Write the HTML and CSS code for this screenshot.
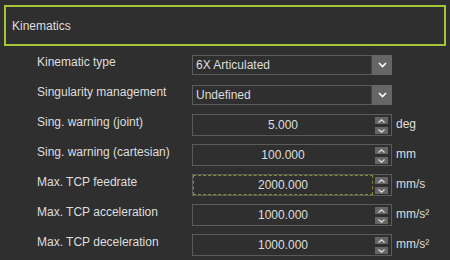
FILE: index.html
```html
<!DOCTYPE html>
<html lang="en">
<head>
    <meta charset="UTF-8">
    <meta name="viewport" content="width=device-width, initial-scale=1.0">
    <title>Kinematics</title>
    <link rel="stylesheet" href="styles.css">
</head>
<body>
    <div class="section-title">Kinematics</div>
    <div class="form">
        <label>Kinematic type</label>
        <div class="combo">
            <span class="value">6X Articulated</span>
            <span class="drop"><svg width="9" height="6" viewBox="0 0 9 6"><path d="M1 1 L4.5 4.5 L8 1" fill="none" stroke="#fff" stroke-width="1.6"/></svg></span>
        </div>
        <span class="unit"></span>

        <label>Singularity management</label>
        <div class="combo">
            <span class="value">Undefined</span>
            <span class="drop"><svg width="9" height="6" viewBox="0 0 9 6"><path d="M1 1 L4.5 4.5 L8 1" fill="none" stroke="#fff" stroke-width="1.6"/></svg></span>
        </div>
        <span class="unit"></span>

        <label>Sing. warning (joint)</label>
        <div class="spin">
            <span class="value">5.000</span>
            <span class="arrows">
                <span class="arrow"><svg width="7" height="4" viewBox="0 0 7 4"><path d="M0.5 3.5 L3.5 0.8 L6.5 3.5" fill="none" stroke="#ddd" stroke-width="1.2"/></svg></span>
                <span class="arrow"><svg width="7" height="4" viewBox="0 0 7 4"><path d="M0.5 0.5 L3.5 3.2 L6.5 0.5" fill="none" stroke="#ddd" stroke-width="1.2"/></svg></span>
            </span>
        </div>
        <span class="unit">deg</span>

        <label>Sing. warning (cartesian)</label>
        <div class="spin">
            <span class="value">100.000</span>
            <span class="arrows">
                <span class="arrow"><svg width="7" height="4" viewBox="0 0 7 4"><path d="M0.5 3.5 L3.5 0.8 L6.5 3.5" fill="none" stroke="#ddd" stroke-width="1.2"/></svg></span>
                <span class="arrow"><svg width="7" height="4" viewBox="0 0 7 4"><path d="M0.5 0.5 L3.5 3.2 L6.5 0.5" fill="none" stroke="#ddd" stroke-width="1.2"/></svg></span>
            </span>
        </div>
        <span class="unit">mm</span>

        <label>Max. TCP feedrate</label>
        <div class="spin focused">
            <span class="value">2000.000</span>
            <span class="arrows">
                <span class="arrow"><svg width="7" height="4" viewBox="0 0 7 4"><path d="M0.5 3.5 L3.5 0.8 L6.5 3.5" fill="none" stroke="#ddd" stroke-width="1.2"/></svg></span>
                <span class="arrow"><svg width="7" height="4" viewBox="0 0 7 4"><path d="M0.5 0.5 L3.5 3.2 L6.5 0.5" fill="none" stroke="#ddd" stroke-width="1.2"/></svg></span>
            </span>
        </div>
        <span class="unit">mm/s</span>

        <label>Max. TCP acceleration</label>
        <div class="spin">
            <span class="value">1000.000</span>
            <span class="arrows">
                <span class="arrow"><svg width="7" height="4" viewBox="0 0 7 4"><path d="M0.5 3.5 L3.5 0.8 L6.5 3.5" fill="none" stroke="#ddd" stroke-width="1.2"/></svg></span>
                <span class="arrow"><svg width="7" height="4" viewBox="0 0 7 4"><path d="M0.5 0.5 L3.5 3.2 L6.5 0.5" fill="none" stroke="#ddd" stroke-width="1.2"/></svg></span>
            </span>
        </div>
        <span class="unit">mm/s²</span>

        <label>Max. TCP deceleration</label>
        <div class="spin">
            <span class="value">1000.000</span>
            <span class="arrows">
                <span class="arrow"><svg width="7" height="4" viewBox="0 0 7 4"><path d="M0.5 3.5 L3.5 0.8 L6.5 3.5" fill="none" stroke="#ddd" stroke-width="1.2"/></svg></span>
                <span class="arrow"><svg width="7" height="4" viewBox="0 0 7 4"><path d="M0.5 0.5 L3.5 3.2 L6.5 0.5" fill="none" stroke="#ddd" stroke-width="1.2"/></svg></span>
            </span>
        </div>
        <span class="unit">mm/s²</span>
    </div>
</body>
</html>
```

FILE: styles.css
```css
body {
    margin: 0;
    padding: 5px 4px 0;
    height: 255px;
    overflow: hidden;
    background-color: #2f2f2f;
    color: #dedede;
    font-family: "Liberation Sans", Arial, sans-serif;
    font-size: 12px;
}
.section-title {
    height: 37px;
    border: 2px solid #a5c437;
    display: flex;
    align-items: center;
    padding-left: 6px;
}
.form {
    display: grid;
    grid-template-columns: 155px 200px auto;
    grid-auto-rows: 30px;
    align-items: center;
    margin-top: 4px;
    padding-left: 33px;
}
.form label {
    padding-bottom: 6px;
}
.combo {
    height: 18px;
    border: 1px solid #5b5b5b;
    display: flex;
    align-items: stretch;
}
.combo .value {
    flex: 1;
    display: flex;
    align-items: center;
    padding-left: 3px;
    border-right: 1px solid #444;
}
.drop {
    width: 20px;
    margin: -1px -1px -1px 0;
    background-color: #666;
    display: flex;
    align-items: center;
    justify-content: center;
}
.spin {
    height: 20px;
    border: 1px solid #5b5b5b;
    display: flex;
    align-items: stretch;
    position: relative;
}
.spin .value {
    flex: 1;
    display: flex;
    align-items: center;
    justify-content: center;
    margin-right: 2px;
}
.spin.focused .value {
    outline: 1px dashed #8a8a3a;
    outline-offset: -1px;
}
.arrows {
    width: 13px;
    padding: 2px 3px 1px 0;
    display: flex;
    flex-direction: column;
    justify-content: space-between;
}
.arrow {
    height: 7px;
    background-color: #666;
    display: flex;
    align-items: center;
    justify-content: center;
}
.unit {
    padding-left: 4px;
    padding-bottom: 2px;
}
```
